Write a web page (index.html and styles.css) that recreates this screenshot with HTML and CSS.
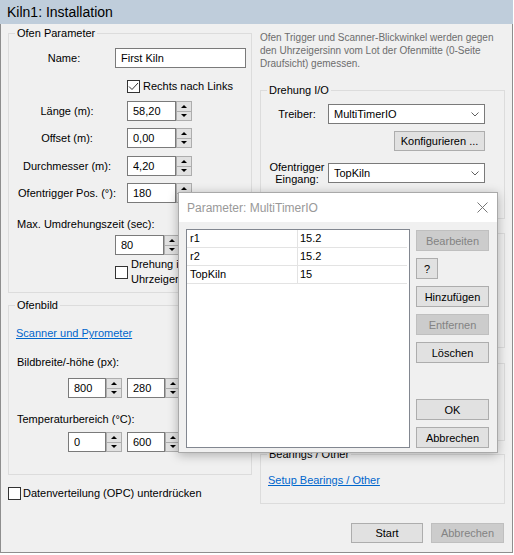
FILE: index.html
```html
<!DOCTYPE html>
<html>
<head>
    <title>Kiln1: Installation</title>
    <meta charset="UTF-8">
    <meta name="viewport" content="width=device-width, initial-scale=1.0">
    <link rel="stylesheet" href="styles.css">
</head>
<body>
    <div class="window">
        <div class="titlebar">Kiln1: Installation</div>
        <div class="client">
            <!-- linke Spalte -->
            <div class="col">
                <fieldset class="group group-ofen">
                    <legend>Ofen Parameter</legend>
                    <div class="row row-name">
                        <label class="lbl lbl-name">Name:</label>
                        <input class="textbox tb-name" type="text" value="First Kiln">
                    </div>
                    <div class="row row-check1">
                        <span class="checkbox checked">
                            <svg width="11" height="11" viewBox="0 0 11 11"><polyline points="1,5.5 4,8.5 10,2" fill="none" stroke="#333" stroke-width="1"/></svg>
                        </span>
                        <span class="check-text">Rechts nach Links</span>
                    </div>
                    <div class="row row-num">
                        <label class="lbl lbl-num">Länge (m):</label>
                        <div class="spin">
                            <input class="spin-text w49" type="text" value="58,20">
                            <div class="spin-btns"><span class="up"></span><span class="down"></span></div>
                        </div>
                    </div>
                    <div class="row row-num">
                        <label class="lbl lbl-num">Offset (m):</label>
                        <div class="spin">
                            <input class="spin-text w49" type="text" value="0,00">
                            <div class="spin-btns"><span class="up"></span><span class="down"></span></div>
                        </div>
                    </div>
                    <div class="row row-num mt8">
                        <label class="lbl lbl-num">Durchmesser (m):</label>
                        <div class="spin">
                            <input class="spin-text w49" type="text" value="4,20">
                            <div class="spin-btns"><span class="up"></span><span class="down"></span></div>
                        </div>
                    </div>
                    <div class="row row-num">
                        <label class="lbl lbl-num">Ofentrigger Pos. (°):</label>
                        <div class="spin">
                            <input class="spin-text w49" type="text" value="180">
                            <div class="spin-btns"><span class="up"></span><span class="down"></span></div>
                        </div>
                    </div>
                    <div class="sub-label mt14">Max. Umdrehungszeit (sec):</div>
                    <div class="row row-time">
                        <div class="spin">
                            <input class="spin-text w49" type="text" value="80">
                            <div class="spin-btns"><span class="up"></span><span class="down"></span></div>
                        </div>
                    </div>
                    <div class="row row-check2">
                        <span class="checkbox"></span>
                        <span class="check-text wrap">Drehung im Uhrzeigersinn</span>
                    </div>
                </fieldset>

                <fieldset class="group group-bild">
                    <legend>Ofenbild</legend>
                    <a class="link link-scanner" href="#">Scanner und Pyrometer</a>
                    <div class="sub-label mt15">Bildbreite/-höhe (px):</div>
                    <div class="row row-pair mt9">
                        <div class="spin">
                            <input class="spin-text w38" type="text" value="800">
                            <div class="spin-btns"><span class="up"></span><span class="down"></span></div>
                        </div>
                        <div class="spin">
                            <input class="spin-text w38" type="text" value="280">
                            <div class="spin-btns"><span class="up"></span><span class="down"></span></div>
                        </div>
                    </div>
                    <div class="sub-label mt14">Temperaturbereich (°C):</div>
                    <div class="row row-pair mt6">
                        <div class="spin">
                            <input class="spin-text w38" type="text" value="0">
                            <div class="spin-btns"><span class="up"></span><span class="down"></span></div>
                        </div>
                        <div class="spin">
                            <input class="spin-text w38" type="text" value="600">
                            <div class="spin-btns"><span class="up"></span><span class="down"></span></div>
                        </div>
                    </div>
                </fieldset>

                <div class="row row-opc">
                    <span class="checkbox"></span>
                    <span class="check-text">Datenverteilung (OPC) unterdrücken</span>
                </div>
            </div>

            <!-- rechte Spalte -->
            <div class="col">
                <p class="desc">Ofen Trigger und Scanner-Blickwinkel werden gegen<br>den Uhrzeigersinn vom Lot der Ofenmitte (0-Seite<br>Draufsicht) gemessen.</p>

                <fieldset class="group group-io">
                    <legend>Drehung I/O</legend>
                    <div class="row row-io">
                        <label class="lbl lbl-io">Treiber:</label>
                        <div class="combo">
                            <span>MultiTimerIO</span>
                            <svg width="8" height="5" viewBox="0 0 8 5"><polyline points="0.5,0.5 4,4 7.5,0.5" fill="none" stroke="#606060" stroke-width="1"/></svg>
                        </div>
                    </div>
                    <div class="row row-konf">
                        <button class="btn btn-konf">Konfigurieren ...</button>
                    </div>
                    <div class="row row-io mt10">
                        <label class="lbl lbl-io two-lines">Ofentrigger<br>Eingang:</label>
                        <div class="combo">
                            <span>TopKiln</span>
                            <svg width="8" height="5" viewBox="0 0 8 5"><polyline points="0.5,0.5 4,4 7.5,0.5" fill="none" stroke="#606060" stroke-width="1"/></svg>
                        </div>
                    </div>
                </fieldset>

                <fieldset class="group group-hidden1"></fieldset>
                <fieldset class="group group-hidden2"></fieldset>

                <fieldset class="group group-bearings">
                    <legend>Bearings / Other</legend>
                    <a class="link link-bearings" href="#">Setup Bearings / Other</a>
                </fieldset>

                <div class="row row-actions">
                    <button class="btn btn-start">Start</button>
                    <button class="btn btn-cancel" disabled>Abbrechen</button>
                </div>
            </div>
        </div>

        <!-- Dialog: Parameter -->
        <div class="dialog">
            <div class="dialog-title">
                <span>Parameter: MultiTimerIO</span>
                <svg width="11" height="11" viewBox="0 0 11 11"><path d="M0.5,0.5 L10.5,10.5 M10.5,0.5 L0.5,10.5" stroke="#777" stroke-width="1" fill="none"/></svg>
            </div>
            <div class="dialog-body">
                <div class="list">
                    <div class="list-row"><span class="cell-name">r1</span><span class="cell-val">15.2</span></div>
                    <div class="list-row"><span class="cell-name">r2</span><span class="cell-val">15.2</span></div>
                    <div class="list-row"><span class="cell-name">TopKiln</span><span class="cell-val">15</span></div>
                </div>
                <div class="dialog-buttons">
                    <button class="btn btn-dlg" disabled>Bearbeiten</button>
                    <button class="btn btn-help">?</button>
                    <button class="btn btn-dlg">Hinzufügen</button>
                    <button class="btn btn-dlg" disabled>Entfernen</button>
                    <button class="btn btn-dlg">Löschen</button>
                    <button class="btn btn-dlg btn-ok">OK</button>
                    <button class="btn btn-dlg">Abbrechen</button>
                </div>
            </div>
        </div>
    </div>
</body>
</html>
```

FILE: styles.css
```css
body {
    margin: 0;
    background-color: #ffffff;
    font-family: "Liberation Sans", Arial, sans-serif;
    font-size: 11px;
    color: #000;
}
.window {
    position: relative;
    width: 513px;
    height: 553px;
    display: flex;
    flex-direction: column;
    background-color: #f0f0f0;
}
.titlebar {
    flex: none;
    height: 24px;
    line-height: 24px;
    padding-left: 7px;
    background-color: #bfcddb;
    font-size: 14px;
}
.client {
    flex: 1;
    display: grid;
    grid-template-columns: 244px 245px;
    column-gap: 8px;
    align-items: start;
    padding: 2px 7px 0 7px;
    border: 1px solid #8e8e8e;
    border-top: none;
}
.col {
    display: flex;
    flex-direction: column;
}

/* Gruppen */
.group {
    margin: 0;
    padding: 0;
    min-width: 0;
    box-sizing: border-box;
    border: 1px solid #dcdcdc;
    display: flex;
    flex-direction: column;
    align-items: flex-start;
}
.group legend {
    margin-left: 6px;
    padding: 0 2px;
    line-height: 14px;
}
.group-ofen { height: 267px; }
.group-bild { height: 177px; margin-top: 5px; }
.group-io { height: 136px; margin-top: 13px; }
.group-hidden1 { height: 115px; margin-top: 14px; }
.group-hidden2 { height: 78px; margin-top: 15px; }
.group-bearings { height: 56px; margin-top: 7px; }
.group-bearings legend { line-height: 12px; }

.row {
    display: flex;
    align-items: center;
}
.mt6 { margin-top: 6px; }
.mt8 { margin-top: 8px !important; }
.mt9 { margin-top: 9px; }
.mt10 { margin-top: 10px !important; }
.mt14 { margin-top: 14px; }
.mt15 { margin-top: 15px; }

.lbl {
    text-align: center;
    line-height: 14px;
}
.row-name { margin-top: 8px; }
.lbl-name {
    width: 94px;
    margin-left: 8px;
    margin-right: 4px;
}
.row-num { margin-top: 7px; }
.lbl-num {
    width: 100px;
    margin-left: 8px;
    margin-right: 10px;
}
.sub-label {
    margin-left: 8px;
    line-height: 14px;
}
.row-time {
    margin-top: 4px;
    margin-left: 106px;
}
.row-pair {
    margin-left: 59px;
    gap: 5px;
}

/* Eingabefelder */
.textbox, .spin-text {
    box-sizing: border-box;
    height: 20px;
    margin: 0;
    border: 1px solid #7a7a7a;
    background: #fff;
    font: inherit;
    color: #000;
    outline: none;
}
.tb-name {
    width: 131px;
    padding: 0 5px;
}
.spin {
    display: flex;
    height: 20px;
}
.spin-text { padding: 0 5px; }
.w49 { width: 49px; }
.w38 { width: 38px; }
.spin-btns {
    width: 16px;
    display: flex;
    flex-direction: column;
}
.spin-btns span {
    flex: 1;
    display: flex;
    align-items: center;
    justify-content: center;
    box-sizing: border-box;
    background: #e1e1e1;
    border: 1px solid #adadad;
}
.spin-btns .up { border-bottom: none; }
.spin-btns .up::after {
    content: "";
    border-left: 3px solid transparent;
    border-right: 3px solid transparent;
    border-bottom: 3px solid #000;
}
.spin-btns .down::after {
    content: "";
    border-left: 3px solid transparent;
    border-right: 3px solid transparent;
    border-top: 3px solid #000;
}

/* Checkboxen */
.checkbox {
    flex: none;
    width: 13px;
    height: 13px;
    box-sizing: border-box;
    border: 1px solid #333;
    background: #fff;
    display: flex;
    align-items: center;
    justify-content: center;
}
.check-text {
    margin-left: 3px;
    line-height: 15px;
}
.check-text.wrap { width: 70px; }
.row-check1 {
    margin-top: 11px;
    margin-left: 118px;
}
.row-check2 {
    margin-top: 2px;
    margin-left: 106px;
}
.row-opc {
    margin-top: 11px;
}
.row-opc .check-text { margin-left: 2px; }

.link {
    color: #0066cc;
    text-decoration: underline;
    line-height: 14px;
}
.link-scanner {
    margin-top: 14px;
    margin-left: 7px;
}
.link-bearings {
    margin-top: 13px;
    margin-left: 7px;
}

/* rechte Spalte */
.desc {
    margin: 5px 0 0 0;
    font-size: 10px;
    line-height: 13px;
    color: #6d6d6d;
    white-space: nowrap;
}
.row-io {
    margin-top: 7px;
    margin-left: 7px;
}
.lbl-io {
    width: 58px;
    margin-right: 2px;
}
.lbl-io.two-lines { line-height: 12px; }
.combo {
    box-sizing: border-box;
    width: 157px;
    height: 20px;
    border: 1px solid #7a7a7a;
    background: #fff;
    display: flex;
    align-items: center;
    justify-content: space-between;
    padding: 0 5px 0 5px;
}
.row-konf {
    align-self: stretch;
    justify-content: flex-end;
    margin-top: 7px;
    margin-right: 19px;
}

/* Buttons */
.btn {
    box-sizing: border-box;
    height: 20px;
    margin: 0;
    padding: 0;
    border: 1px solid #adadad;
    background-color: #e1e1e1;
    font: inherit;
    color: #000;
}
.btn:disabled {
    background-color: #cccccc;
    border-color: #bfbfbf;
    color: #838383;
}
.btn-konf { width: 91px; }
.row-actions {
    justify-content: flex-end;
    gap: 8px;
    margin-top: 19px;
    margin-right: 1px;
}
.btn-start { width: 72px; }
.btn-cancel { width: 73px; }

/* Dialog */
.dialog {
    position: absolute;
    left: 178px;
    top: 192px;
    width: 320px;
    height: 261px;
    box-sizing: border-box;
    border: 1px solid #a9a9a9;
    background-color: #f0f0f0;
    box-shadow: 0 2px 10px rgba(0,0,0,0.28);
    display: flex;
    flex-direction: column;
}
.dialog-title {
    flex: none;
    height: 29px;
    background: #fff;
    display: flex;
    align-items: center;
    justify-content: space-between;
    padding: 0 9px 0 8px;
    font-size: 12px;
    color: #999;
}
.dialog-body {
    flex: 1;
    display: flex;
    gap: 6px;
    padding: 7px 8px 4px 7px;
}
.list {
    width: 224px;
    box-sizing: border-box;
    border: 1px solid #828790;
    background: #fff;
}
.list-row {
    display: flex;
    height: 17px;
    line-height: 17px;
    margin-right: 2px;
    border-bottom: 1px solid #e3e3e3;
}
.cell-name {
    width: 107px;
    padding-left: 3px;
    border-right: 1px solid #e3e3e3;
}
.cell-val { padding-left: 2px; }
.dialog-buttons {
    width: 73px;
    display: flex;
    flex-direction: column;
    align-items: flex-start;
    gap: 7px;
    padding-top: 1px;
}
.btn-dlg {
    width: 73px;
    height: 21px;
}
.btn-help {
    width: 22px;
    height: 21px;
}
.btn-ok { margin-top: auto; }
```
